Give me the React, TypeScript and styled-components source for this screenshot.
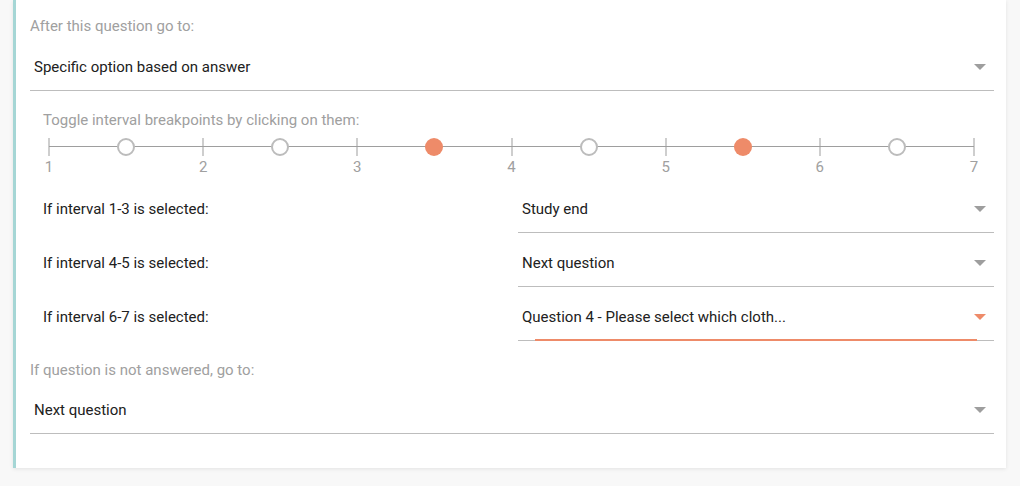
import React from "react";
import styled, { createGlobalStyle } from "styled-components";

const Global = createGlobalStyle`
  html, body { margin: 0; padding: 0; background: #f8f8f8; }
  body { font-family: Roboto, "Noto Sans", Arial, sans-serif; font-size: 15px; }
  * { box-sizing: border-box; }
`;

const ORANGE = "#ee8b69";

const Page = styled.div`
  width: 1020px;
  height: 486px;
  padding-left: 13px;
  overflow: hidden;
`;

const Card = styled.div`
  width: 993px;
  background: #fff;
  border-left: 3px solid #a5d6d5;
  box-shadow: 0 1px 4px rgba(0, 0, 0, 0.09);
  padding: 18px 12px 34px 14px;
  display: flex;
  flex-direction: column;
`;

const Label = styled.div`
  color: #a0a0a0;
  font-size: 15px;
  line-height: 16px;
`;

const SelectBox = styled.div<{ $width?: string }>`
  position: relative;
  height: 47px;
  width: ${(p) => p.$width || "100%"};
  border-bottom: 1px solid #bdbdbd;
  display: flex;
  align-items: center;
  justify-content: space-between;
  padding: 0 8px 1px 4px;
  color: #212121;
  font-size: 15px;
  flex-shrink: 0;
`;

const FocusLine = styled.div`
  position: absolute;
  left: 17px;
  right: 17px;
  bottom: -1px;
  height: 2px;
  background: ${ORANGE};
`;

const Arrow = styled.span<{ $color?: string }>`
  width: 0;
  height: 0;
  border-left: 6.5px solid transparent;
  border-right: 6.5px solid transparent;
  border-top: 6px solid ${(p) => p.$color || "#9e9e9e"};
  margin-top: 1px;
`;

const Select = ({ value, focused, width }: { value: string; focused?: boolean; width?: string }) => (
  <SelectBox $width={width}>
    <span>{value}</span>
    <Arrow $color={focused ? ORANGE : undefined} />
    {focused && <FocusLine />}
  </SelectBox>
);

const Gap = styled.div<{ $h: number }>`
  height: ${(p) => p.$h}px;
  flex-shrink: 0;
`;

const Interval = styled.div`
  padding-left: 13px;
  display: flex;
  flex-direction: column;
`;

const SliderWrap = styled.div`
  padding: 10px 20px 0 6px;
  height: 58px;
`;

const Track = styled.div`
  position: relative;
  width: 925px;
  height: 40px;
`;

const Line = styled.div`
  position: absolute;
  left: 0;
  right: 0;
  top: 8px;
  height: 1px;
  background: #9e9e9e;
`;

const Tick = styled.div`
  position: absolute;
  top: 0;
  width: 1px;
  height: 18px;
  background: #9e9e9e;
  transform: translateX(-0.5px);
`;

const TickNum = styled.div`
  position: absolute;
  top: 21px;
  width: 20px;
  margin-left: -10px;
  text-align: center;
  color: #a0a0a0;
  font-size: 15px;
  line-height: 16px;
`;

const Dot = styled.div<{ $on?: boolean }>`
  position: absolute;
  top: -0.5px;
  width: 18px;
  height: 18px;
  margin-left: -9px;
  border-radius: 50%;
  background: ${(p) => (p.$on ? ORANGE : "#fff")};
  border: ${(p) => (p.$on ? "none" : "2px solid #bcbcbc")};
  cursor: pointer;
`;

const Row = styled.div`
  display: flex;
  align-items: center;
  justify-content: space-between;
`;

const RowLabel = styled.div`
  color: #212121;
  font-size: 15px;
  padding-bottom: 1px;
`;

const breakpoints = [false, false, true, false, true, false];
const rows = [
  { label: "If interval 1-3 is selected:", value: "Study end" },
  { label: "If interval 4-5 is selected:", value: "Next question" },
  { label: "If interval 6-7 is selected:", value: "Question 4 - Please select which cloth...", focused: true },
];

export default function App() {
  const step = 925 / 6;
  return (
    <>
      <Global />
      <Page>
        <Card>
          <Label>After this question go to:</Label>
          <Gap $h={10} />
          <Select value="Specific option based on answer" />
          <Gap $h={21} />
          <Interval>
            <Label>Toggle interval breakpoints by clicking on them:</Label>
            <SliderWrap>
              <Track>
                <Line />
                {Array.from({ length: 7 }).map((_, i) => (
                  <React.Fragment key={i}>
                    <Tick style={{ left: i * step }} />
                    <TickNum style={{ left: i * step }}>{i + 1}</TickNum>
                  </React.Fragment>
                ))}
                {breakpoints.map((on, i) => (
                  <Dot key={i} $on={on} style={{ left: (i + 0.5) * step }} />
                ))}
              </Track>
            </SliderWrap>
            {rows.map((r, i) => (
              <React.Fragment key={i}>
                {i > 0 && <Gap $h={7} />}
                <Row>
                  <RowLabel>{r.label}</RowLabel>
                  <Select value={r.value} focused={r.focused} width="476px" />
                </Row>
              </React.Fragment>
            ))}
          </Interval>
          <Gap $h={21} />
          <Label>If question is not answered, go to:</Label>
          <Gap $h={9} />
          <Select value="Next question" />
        </Card>
      </Page>
    </>
  );
}
